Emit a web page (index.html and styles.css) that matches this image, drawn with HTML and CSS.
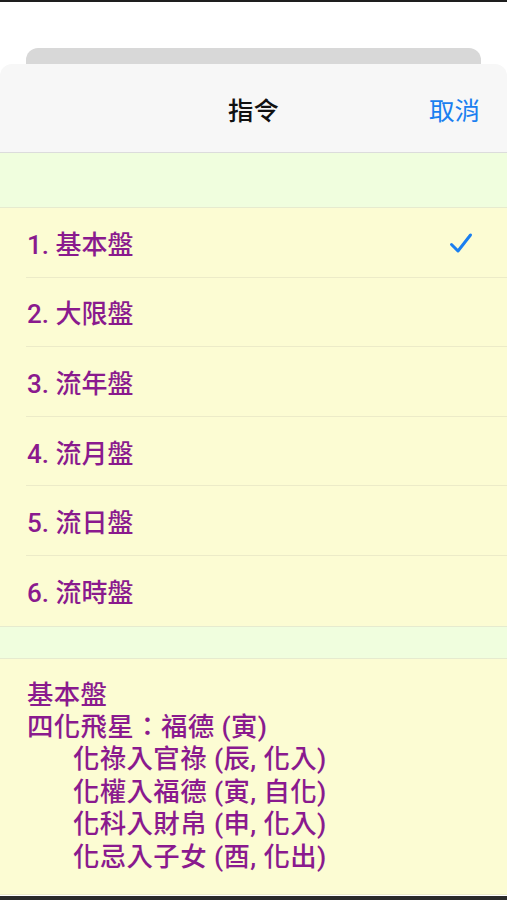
FILE: index.html
```html
<!DOCTYPE html>
<html lang="zh-Hant">
<head>
<meta charset="utf-8">
<link rel="stylesheet" href="styles.css">
</head>
<body>
<div class="topbar"></div>
<div class="screen">
  <div class="backcard"></div>
  <div class="sheet">
    <div class="header">
      <div class="title">指令</div>
      <div class="cancel">取消</div>
    </div>
    <div class="band band-top"></div>
    <ul class="list">
      <li class="row"><span>1. 基本盤</span>
        <svg class="check" width="24" height="22" viewBox="0 0 24 22"><path d="M2.5 12.5 L9 19 L21.5 3" fill="none" stroke="#1a7ff0" stroke-width="3" stroke-linecap="round" stroke-linejoin="round"/></svg>
      </li>
      <li class="row"><span>2. 大限盤</span></li>
      <li class="row"><span>3. 流年盤</span></li>
      <li class="row"><span>4. 流月盤</span></li>
      <li class="row"><span>5. 流日盤</span></li>
      <li class="row"><span>6. 流時盤</span></li>
    </ul>
    <div class="band band-mid"></div>
    <div class="info">
      <div class="line">基本盤</div>
      <div class="line">四化飛星：福德 (寅)</div>
      <div class="line sub">化祿入官祿 (辰, 化入)</div>
      <div class="line sub">化權入福德 (寅, 自化)</div>
      <div class="line sub">化科入財帛 (申, 化入)</div>
      <div class="line sub">化忌入子女 (酉, 化出)</div>
    </div>
  </div>
</div>
<div class="bottombar"></div>
</body>
</html>
```
FILE: styles.css
```css
* { box-sizing: border-box; }
html, body { margin: 0; padding: 0; }
body {
  width: 507px;
  height: 900px;
  overflow: hidden;
  background: #ffffff;
  font-family: Roboto, "Noto Sans CJK TC", sans-serif;
  position: relative;
}
.topbar { height: 2px; background: #1e1e1e; }
.screen { padding-top: 46px; }
.backcard {
  margin: 0 26px;
  height: 28px;
  background: #d8d8d8;
  border-radius: 12px 12px 0 0;
}
.sheet {
  margin-top: -12px;
  position: relative;
  background: #f7f7f7;
  border-radius: 12px 12px 0 0;
  overflow: hidden;
}
.header {
  height: 89px;
  display: flex;
  align-items: center;
  justify-content: center;
  position: relative;
  border-bottom: 1px solid #dcdcdc;
}
.title {
  font-size: 25.5px;
  font-weight: 500;
  color: #111;
}
.cancel {
  position: absolute;
  right: 27px;
  top: 50%;
  transform: translateY(-50%);
  font-size: 25.5px;
  color: #1a7ff0;
}
.band { background: #f0fede; border-bottom: 1px solid #e6ebcf; }
.band-top { height: 55px; }
.band-mid { height: 32px; }
.list {
  list-style: none;
  margin: 0;
  padding: 0 0 0 26px;
  background: #fcfcd3;
  border-bottom: 1px solid #e6ebcf;
}
.row {
  height: 69.6px;
  display: flex;
  align-items: center;
  justify-content: space-between;
  padding-right: 34px;
  border-bottom: 1px solid #ecebc8;
  font-size: 26px;
  font-weight: 500;
  color: #8a1a8e;
  padding-left: 1px;
}
.row:last-child { border-bottom: none; }
.check { margin-top: 1px; }
.info {
  background: #fcfcd3;
  padding: 20px 27px 22px;
  height: 236px;
  color: #8a1a8e;
  font-size: 26.4px;
  font-weight: 500;
  letter-spacing: 0.4px;
  border-bottom: 1px solid #ecebc8;
}
.line { line-height: 32.4px; height: 32.4px; white-space: nowrap; }
.sub { padding-left: 46px; }
.bottombar {
  position: absolute;
  left: 0; right: 0; bottom: 0;
  height: 4px;
  background: #2a2a2a;
}
```
